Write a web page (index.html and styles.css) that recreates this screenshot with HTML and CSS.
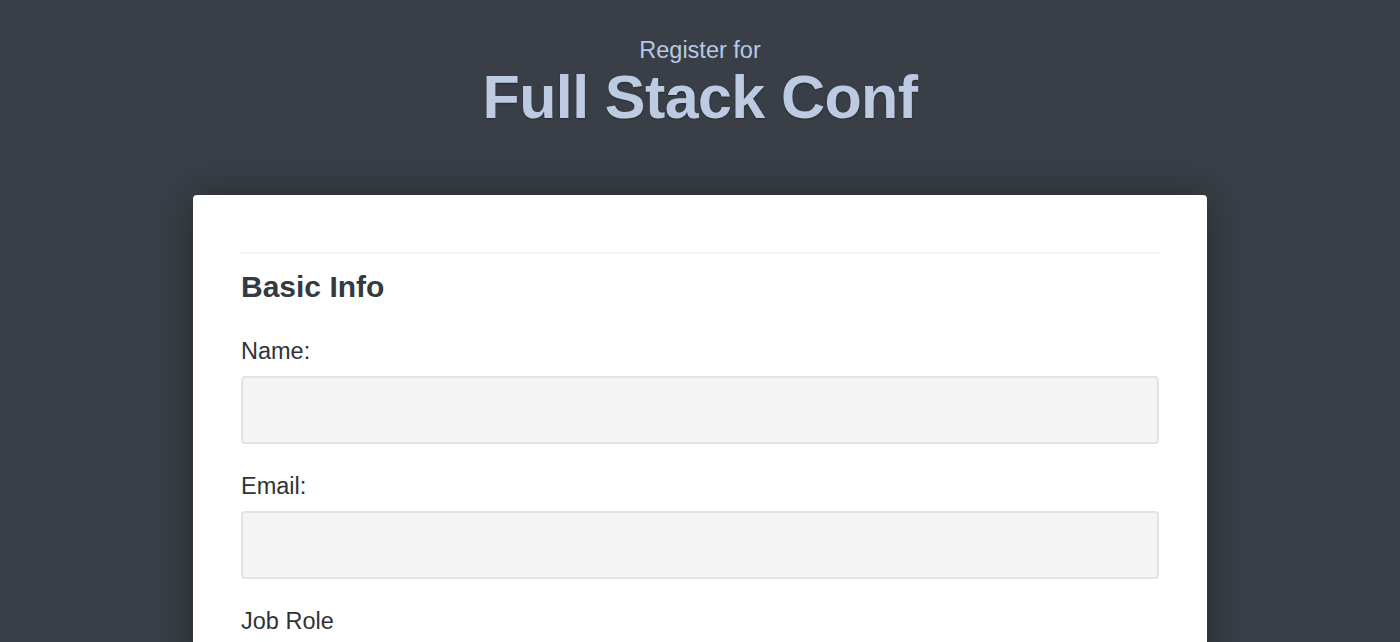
FILE: index.html
```html
<!DOCTYPE html>
<html lang="en">
<head>
<meta charset="utf-8">
<title>Register for Full Stack Conf</title>
<link rel="stylesheet" href="styles.css">
</head>
<body>
<header class="page-header">
  <span class="subtitle">Register for</span>
  <h1 class="title">Full Stack Conf</h1>
</header>
<main class="card">
  <form class="form">
    <fieldset class="section">
      <hr class="rule">
      <h2 class="section-title">Basic Info</h2>
      <div class="field">
        <label class="label" for="name">Name:</label>
        <input class="input" type="text" id="name">
      </div>
      <div class="field">
        <label class="label" for="mail">Email:</label>
        <input class="input" type="email" id="mail">
      </div>
      <div class="field">
        <label class="label" for="title">Job Role</label>
      </div>
    </fieldset>
  </form>
</main>
</body>
</html>
```
FILE: styles.css
```css
* { box-sizing: border-box; }
html, body { margin: 0; padding: 0; }
body {
  background: #3a3f47;
  font-family: "Liberation Sans", Arial, sans-serif;
  height: 642px;
  overflow: hidden;
}
.page-header {
  display: flex;
  flex-direction: column;
  align-items: center;
  padding-top: 37px;
}
.subtitle {
  font-size: 23.5px;
  line-height: 26px;
  color: #b5c9e4;
}
.title {
  margin: 0;
  font-size: 61px;
  line-height: 68px;
  font-weight: 700;
  color: #bccbe2;
  letter-spacing: -0.6px;
  text-shadow: 0 1px 2px rgba(0,0,0,0.35);
}
.card {
  width: 1014px;
  margin: 64px auto 0;
  background: #fff;
  border-radius: 4px;
  padding: 57px 48px 40px;
  box-shadow: 0 0 40px rgba(0,0,0,0.35);
}
.form { margin: 0; }
.section { border: 0; margin: 0; padding: 0; }
.rule {
  margin: 0;
  border: 0;
  height: 2px;
  background: #f1f2f5;
}
.section-title {
  margin: 15px 0 0;
  font-size: 30px;
  line-height: 36px;
  font-weight: 700;
  color: #343a42;
}
.field {
  display: flex;
  flex-direction: column;
  gap: 12px;
  margin-top: 33px;
}
.field + .field { margin-top: 29px; }
.label {
  font-size: 23.5px;
  line-height: 26px;
  color: #2f3338;
}
.input {
  height: 68px;
  width: 100%;
  background: #f4f4f4;
  border: 2px solid #e3e3e3;
  border-radius: 4px;
  font: inherit;
}
```
